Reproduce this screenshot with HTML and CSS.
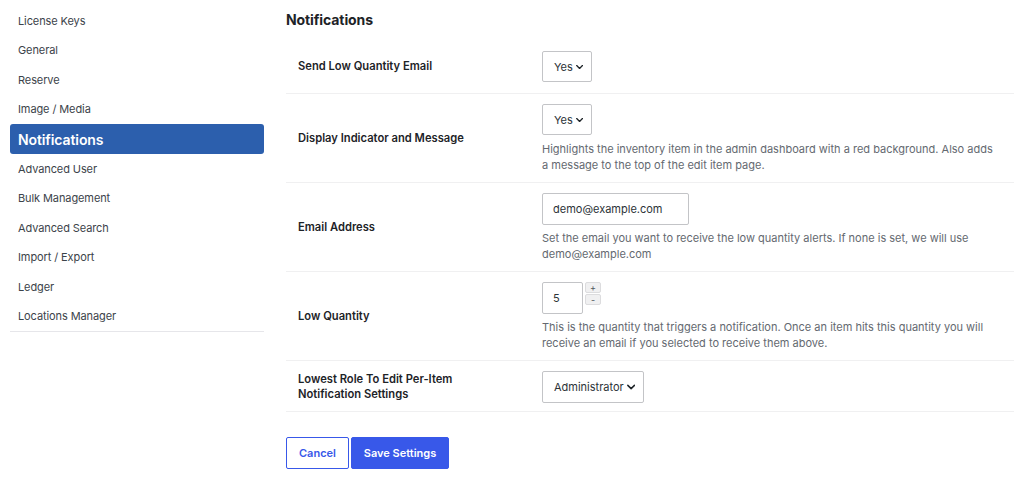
FILE: index.html
```html
<!DOCTYPE html>
<html lang="en">
<head>
<meta charset="utf-8">
<title>Notifications</title>
<link rel="stylesheet" href="styles.css">
</head>
<body>
<div class="page">
  <nav class="sidebar">
    <a class="nav-item">License Keys</a>
    <a class="nav-item">General</a>
    <a class="nav-item">Reserve</a>
    <a class="nav-item">Image / Media</a>
    <a class="nav-item active">Notifications</a>
    <a class="nav-item">Advanced User</a>
    <a class="nav-item">Bulk Management</a>
    <a class="nav-item">Advanced Search</a>
    <a class="nav-item">Import / Export</a>
    <a class="nav-item">Ledger</a>
    <a class="nav-item">Locations Manager</a>
  </nav>
  <main class="content">
    <h2 class="title">Notifications</h2>
    <div class="table">
      <div class="row row-first">
        <div class="label">Send Low Quantity Email</div>
        <div class="value">
          <div class="select sel-yes">Yes<svg class="chev" viewBox="0 0 10 6"><path d="M1 1l4 4 4-4" /></svg></div>
        </div>
      </div>
      <div class="row">
        <div class="label">Display Indicator and Message</div>
        <div class="value">
          <div class="select sel-yes">Yes<svg class="chev" viewBox="0 0 10 6"><path d="M1 1l4 4 4-4" /></svg></div>
          <p class="desc desc-sel">Highlights the inventory item in the admin dashboard with a red background. Also adds a message to the top of the edit item page.</p>
        </div>
      </div>
      <div class="row">
        <div class="label">Email Address</div>
        <div class="value">
          <div class="input email">demo@example.com</div>
          <p class="desc">Set the email you want to receive the low quantity alerts. If none is set, we will use demo@example.com</p>
        </div>
      </div>
      <div class="row">
        <div class="label">Low Quantity</div>
        <div class="value">
          <div class="number">
            <div class="input qty">5</div>
            <div class="spin">
              <span class="spin-btn">+</span>
              <span class="spin-btn">-</span>
            </div>
          </div>
          <p class="desc">This is the quantity that triggers a notification. Once an item hits this quantity you will receive an email if you selected to receive them above.</p>
        </div>
      </div>
      <div class="row row-last">
        <div class="label">Lowest Role To Edit Per-Item<br>Notification Settings</div>
        <div class="value">
          <div class="select sel-role">Administrator<svg class="chev" viewBox="0 0 10 6"><path d="M1 1l4 4 4-4" /></svg></div>
        </div>
      </div>
    </div>
    <div class="actions">
      <button class="btn btn-cancel">Cancel</button>
      <button class="btn btn-save">Save Settings</button>
    </div>
  </main>
</div>
</body>
</html>
```

FILE: styles.css
```css
* { box-sizing: border-box; }
html, body { margin: 0; padding: 0; background: #fff; }
body {
  font-family: Inter, "Liberation Sans", Arial, sans-serif;
  font-size: 11px;
  color: #1d2327;
}
.page {
  display: flex;
  gap: 22px;
  padding: 6px 10px 0 10px;
}
.sidebar {
  width: 254px;
  flex: none;
  display: flex;
  flex-direction: column;
  border-bottom: 1px solid #e6e6ea;
  align-self: flex-start;
}
.nav-item {
  display: flex;
  align-items: center;
  height: 29.5px;
  padding-left: 8px;
  font-size: 11px;
  color: #3c434a;
  letter-spacing: -0.1px;
}
.nav-item.active {
  background: #2c5fad;
  color: #fff;
  font-size: 14px;
  font-weight: 600;
  border-radius: 3px;
  height: 30px;
}
.content {
  flex: 1;
  padding-top: 6px;
}
.title {
  margin: 0;
  font-size: 14px;
  font-weight: 700;
  line-height: 16px;
  color: #1d2327;
  letter-spacing: -0.1px;
}
.table {
  margin-top: 12px;
  display: flex;
  flex-direction: column;
}
.row {
  display: grid;
  grid-template-columns: 256px 1fr;
  align-items: center;
  padding: 10px 0 9px;
  border-bottom: 1px solid #f0f0f1;
}
.row-first { padding: 11px 0 11px; }
.row-last { padding: 10px 0 8px; }
.label {
  padding-left: 12px;
  font-weight: 600;
  font-size: 11.2px;
  line-height: 15px;
  color: #1d2327;
}
.value { display: flex; flex-direction: column; align-items: flex-start; }
.select {
  display: flex;
  align-items: center;
  gap: 3px;
  height: 31px;
  padding: 0 8px 0 11px;
  border: 1px solid #c3c4c7;
  border-radius: 2px;
  font-size: 11px;
  color: #2c3338;
}
.sel-yes { width: 50px; }
.sel-role { height: 32px; width: 102px; padding-left: 11px; }
.chev { width: 9px; height: 6px; }
.chev path { fill: none; stroke: #1d2327; stroke-width: 1.8; stroke-linecap: round; stroke-linejoin: round; }
.input {
  display: flex;
  align-items: center;
  height: 32px;
  border: 1px solid #c3c4c7;
  border-radius: 2px;
  padding: 0 10px;
  font-size: 11px;
  color: #2c3338;
}
.email { width: 147px; }
.number { display: flex; gap: 2px; align-items: flex-start; }
.qty { width: 41px; }
.spin { display: flex; flex-direction: column; gap: 1px; }
.spin-btn {
  width: 16px;
  height: 11px;
  background: #f0f0f1;
  border: 1px solid #dcdcde;
  border-radius: 2px;
  font-size: 9px;
  line-height: 9px;
  text-align: center;
  color: #50575e;
}
.desc {
  margin: 5px 0 0 0;
  font-size: 11px;
  line-height: 16px;
  color: #646970;
  max-width: 458px;
}
.desc-sel { margin-top: 6px; }
.actions {
  display: flex;
  gap: 2px;
  margin-top: 25px;
}
.btn {
  height: 32px;
  font-family: inherit;
  font-size: 11px;
  font-weight: 600;
  border-radius: 2px;
  cursor: pointer;
}
.btn-cancel {
  width: 63px;
  background: #fff;
  color: #3858e9;
  border: 1px solid #3858e9;
}
.btn-save {
  width: 98px;
  background: #3858e9;
  color: #fff;
  border: 1px solid #3858e9;
}
```
